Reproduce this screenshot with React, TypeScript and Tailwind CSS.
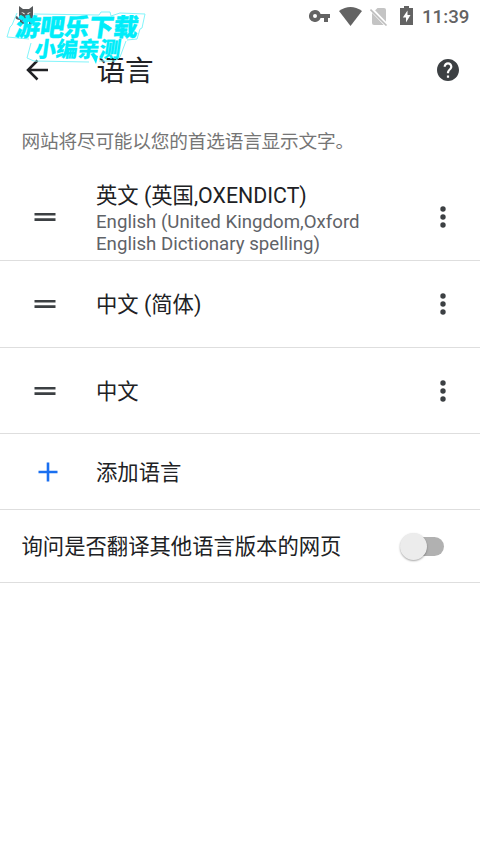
import React, { useState } from 'react';

const cjk = "font-['Roboto','Noto_Sans_CJK_SC',sans-serif]";

function StatusBar() {
  return (
    <div className="flex h-[33px] shrink-0 items-center pl-[14px] pr-[11px] text-[#636363]">
      <svg className="mb-[1px] h-[20px] w-[22px]" viewBox="0 0 22 20" fill="#55585a">
        <path fillRule="evenodd" d="M5 0l4 3h6l4-3v18h-4v-3h-3v3H6v-4q-4 0-5-3l2-1q1 2 2 2zM7 6l3.500 2.500V7zM17 6l-3.500 2.500V7z" />
      </svg>
      <div className="flex-1" />
      <svg className="mb-[1px] h-[12px] w-[21px]" viewBox="0 0 21 12" fill="currentColor">
        <path fillRule="evenodd" d="M6 0a6 6 0 0 1 5.600 4H21v4h-2v4h-4V8h-3.400A6 6 0 1 1 6 0zm0 4a2 2 0 1 0 0 4 2 2 0 0 0 0-4z" />
      </svg>
      <svg className="mb-[1px] ml-[9px] h-[19px] w-[23px]" viewBox="0 0 23 19" fill="currentColor">
        <path d="M0 4Q11.500-4 23 4L11.500 19z" />
      </svg>
      <svg className="mb-[1px] ml-[8px] h-[19px] w-[18px]" viewBox="0 0 18 19">
        <path d="M7.500 1H14q2 0 2 2v15H4q-2 0-2-2V6.500z" fill="#c4c4c4" />
        <path d="M.5 1.500L17 18.500" stroke="#fff" strokeWidth="4" />
        <path d="M.5 2.500L16.500 18.500" stroke="#bdbdbd" strokeWidth="1.600" />
      </svg>
      <svg className="mb-[1px] ml-[12px] h-[20px] w-[13px]" viewBox="0 0 13 20" fill="currentColor">
        <path fillRule="evenodd" d="M4 0h5v2h4v17H0V2h4zM7.500 4.500L2.800 11.500H6v5l4.500-7.500H7.500z" />
      </svg>
      <span className="ml-[9px] w-[47px] whitespace-nowrap text-[18.700px] font-medium leading-[20px]">11:39</span>
    </div>
  );
}

function Watermark() {
  return (
    <div className="pointer-events-none absolute left-0 top-0 h-[68px] w-[152px] font-['Noto_Sans_CJK_SC',sans-serif] font-black text-[#00edfa]">
      <svg className="absolute inset-0" width="152" height="68" viewBox="0 0 152 68" fill="none">
        <path d="M34 15L99 15 101 12 110 12 111 16 146 13 139 39 126 42 120 56 99 58 96 65 91 60 28 59 32 40 8 37 12 26 34 25z" fill="#fff" fillOpacity=".85" />
        <path d="M17 13L12 25 10 27 7 37 29 39M34 14L99 15 101 12H110L111 16 120 13 145 14 142 28 140 29 137 39 127 40M31 43L27 58 34 61 89 62M99 61L115 61 120 57 126 41" stroke="#82f5fb" />
        <path d="M91 54l5 10 2-8z" fill="#00edfa" />
      </svg>
      <div className="absolute left-[15.500px] top-[11px] -skew-x-[8deg] whitespace-nowrap text-[24.500px] leading-[29px] [-webkit-text-stroke:0.4px_#00edfa]">游吧乐下载</div>
      <div className="absolute left-[35px] top-[35px] -skew-x-[8deg] whitespace-nowrap text-[21.500px] leading-[26px] [-webkit-text-stroke:0.2px_#00edfa]">小编亲测</div>
    </div>
  );
}

function LanguageRow({ title, children }: { title: string; children?: React.ReactNode }) {
  return (
    <div className="flex h-[86.670px] shrink-0 items-center border-b-[1.300px] border-[#dedede]">
      <svg className="ml-[34px] h-[10px] w-[22px]" viewBox="0 0 22 10" fill="#3c4043">
        <path d="M.5 1h21v2.600H.5zM.5 6.300h21v2.600H.5z" />
      </svg>
      <div className="ml-[40px] flex-1 pt-[1px]">
        <div className="text-[21.330px] leading-[25px] text-[#202124]">{title}</div>
        {children}
      </div>
      <svg className="mr-[34px] h-[22px] w-[6px]" viewBox="0 0 6 22" fill="#3c4043">
        <circle cx="3" cy="3" r="2.700" />
        <circle cx="3" cy="11" r="2.700" />
        <circle cx="3" cy="19" r="2.700" />
      </svg>
    </div>
  );
}

export default function App() {
  const [on, setOn] = useState(false);
  return (
    <div className={`relative flex h-[853px] w-[480px] flex-col overflow-hidden bg-white ${cjk}`}>
      <StatusBar />
      <header className="flex h-[73px] shrink-0 items-center">
        <svg className="ml-[26px] h-[22px] w-[23px]" viewBox="0 0 23 22" fill="none" stroke="#202124" strokeWidth="2.500">
          <path d="M22 11H2M11.500 1.500L2 11l9.500 9.500" />
        </svg>
        <h1 className="ml-[47.500px] flex-1 pt-[5px] text-[28.500px] leading-[36px] text-[#202124]">语言</h1>
        <svg className="mr-[21px] h-[22px] w-[22px]" viewBox="2 2 20 20" fill="#3c4043">
          <path d="M12 2C6.480 2 2 6.480 2 12s4.480 10 10 10 10-4.480 10-10S17.520 2 12 2zm1 17h-2v-2h2v2zm2.070-7.750l-.9.920C13.450 12.900 13 13.500 13 15h-2v-.5c0-1.100.45-2.100 1.170-2.830l1.240-1.260c.37-.36.59-.86.59-1.410 0-1.100-.9-2-2-2s-2 .9-2 2H8c0-2.210 1.790-4 4-4s4 1.790 4 4c0 .88-.36 1.680-.93 2.250z" />
        </svg>
      </header>
      <p className="flex h-[68.400px] shrink-0 items-center pl-[21.500px] pt-[4px] text-[18.670px] text-[#757575] tracking-[-0.010em]">网站将尽可能以您的首选语言显示文字。</p>
      <LanguageRow title="英文 (英国,OXENDICT)">
        <div className="-mb-[3px] pt-[3px] text-[18.670px] leading-[22px] text-[#5f6368]">
          English (United Kingdom,Oxford
          <br />
          English Dictionary spelling)
        </div>
      </LanguageRow>
      <LanguageRow title="中文 (简体)" />
      <LanguageRow title="中文" />
      <div className="flex h-[76px] shrink-0 items-center border-b-[1.300px] border-[#dedede]">
        <svg className="ml-[38px] h-[20px] w-[20px]" viewBox="0 0 20 20" stroke="#1a6ff0" strokeWidth="2.600">
          <path d="M10 .5v19M.5 10h19" />
        </svg>
        <span className="ml-[38px] pt-[3px] text-[21.330px] text-[#202124]">添加语言</span>
      </div>
      <div className="flex h-[72.500px] shrink-0 items-center border-b-[1.300px] border-[#dedede] pl-[21.500px] pr-[36px]">
        <span className="flex-1 pt-[2px] text-[21.330px] text-[#202124]">询问是否翻译其他语言版本的网页</span>
        <button role="switch" aria-checked={on} onClick={() => setOn(!on)} className="flex h-[27px] w-[44px] items-center">
          <span className="ml-[6px] flex h-[19px] w-[38px] items-center rounded-full bg-[#b1b1b1]">
            <span className={`h-[27px] w-[27px] shrink-0 rounded-full bg-[#ececec] shadow-[0_1px_2px_rgba(0,0,0,0.35)] ${on ? 'ml-[11px]' : '-ml-[6px]'}`} />
          </span>
        </button>
      </div>
      <Watermark />
    </div>
  );
}
